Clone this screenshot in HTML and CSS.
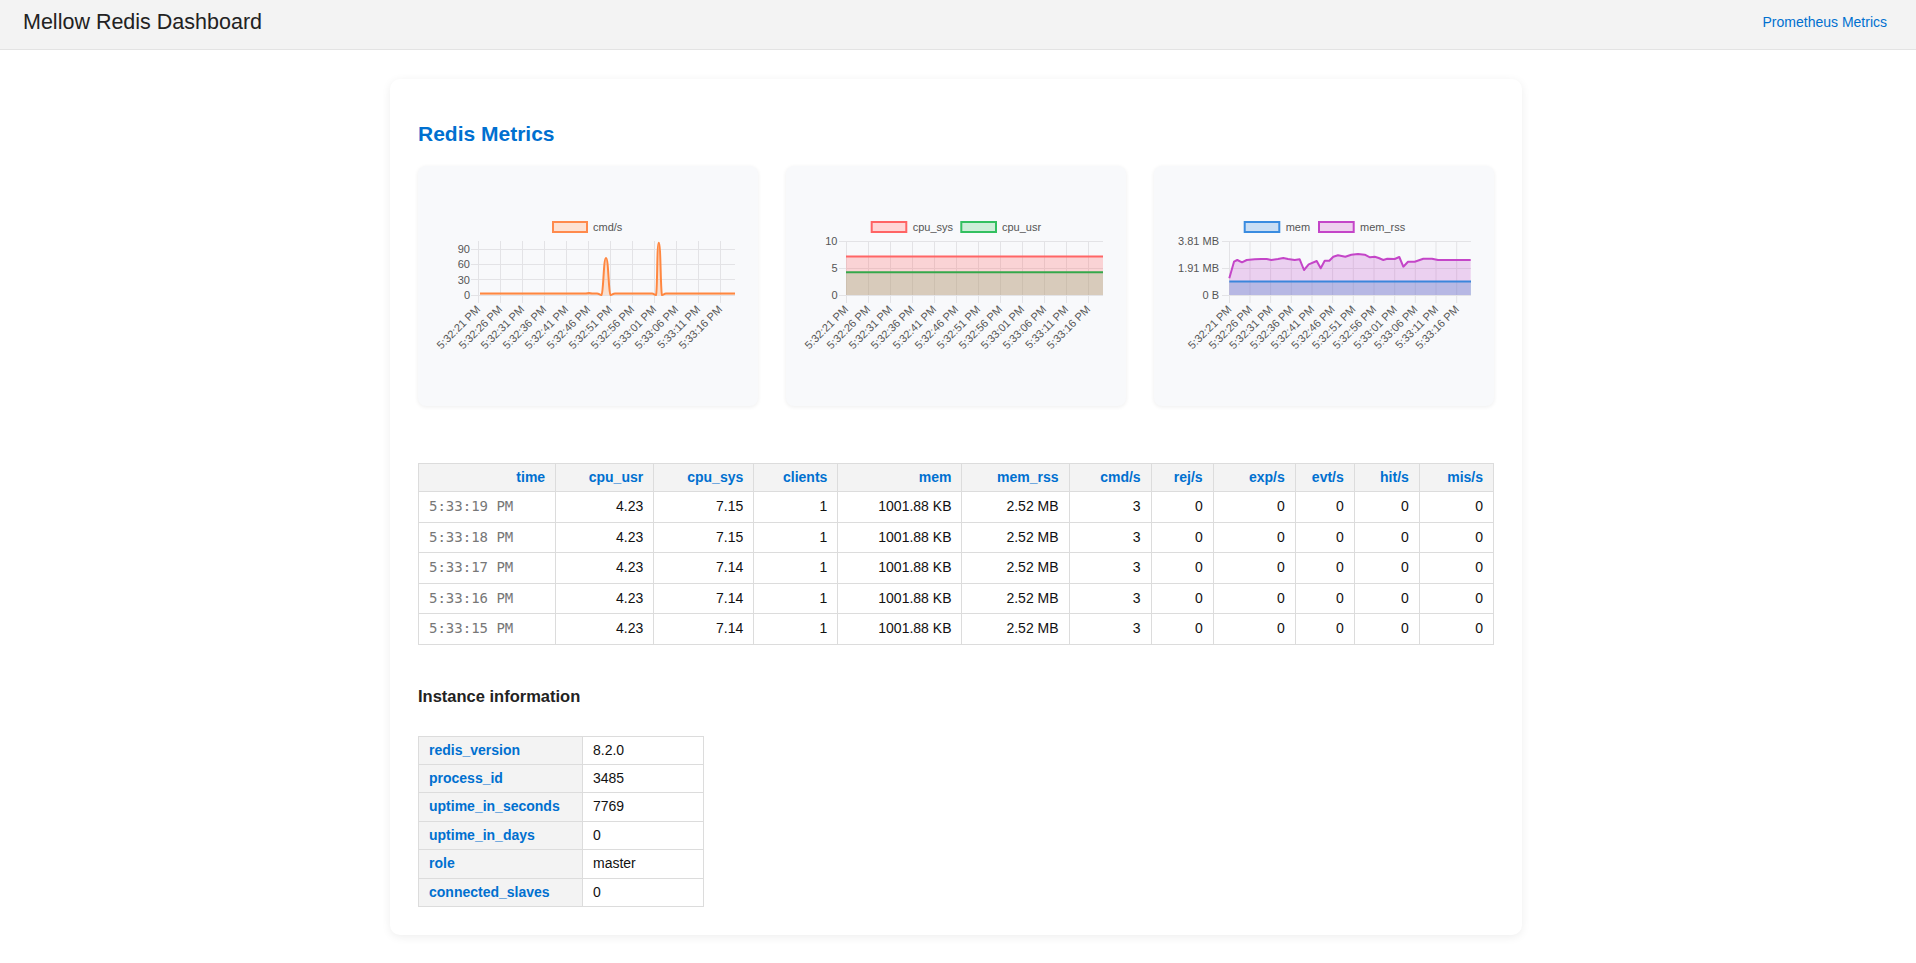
FILE: index.html
```html
<!DOCTYPE html>
<html lang="en">
<head>
<meta charset="utf-8">
<title>Mellow Redis Dashboard</title>
<link rel="stylesheet" href="styles.css">
</head>
<body>
<header class="topbar">
  <div class="brand">Mellow Redis Dashboard</div>
  <a class="nav-link" href="#">Prometheus Metrics</a>
</header>
<main class="page">
  <section class="panel">
    <h2 class="panel-title">Redis Metrics</h2>
    <div class="charts">
      <div class="chart-card">
        <svg class="chart-svg" viewBox="0 0 340 240" width="340" height="240">
          <rect class="lg-orange" x="135" y="56" width="34" height="10"/>
          <text class="lg-text" x="175" y="65">cmd/s</text>
          <path class="grid" d="M53 83.5H317M53 98.5H317M53 113.5H317M53 129.5H317"/>
          <path class="grid" d="M60.5 75V137M82.5 75V137M104.5 75V137M126.5 75V137M148.5 75V137M170.5 75V137M192.5 75V137M214.5 75V137M236.5 75V137M258.5 75V137M280.5 75V137M302.5 75V137"/>
          <text class="ytick" x="52" y="87">90</text>
          <text class="ytick" x="52" y="102">60</text>
          <text class="ytick" x="52" y="117.5">30</text>
          <text class="ytick" x="52" y="133">0</text>
          <path class="fill-orange" d="M62,127.5 L168,127.5 C170,127 172,127 174,127.5 L179,127.5 C181,127.5 182.5,129.5 183.5,129 C185.5,127 185.5,92 188,92 C190.5,92 190.5,127 192.5,129 C193.5,129.5 195,127.5 197,127.5 L234,127.5 C236,127.5 237,129.5 238,129 C239.5,126 238.8,76.7 240.8,76.7 C242.8,76.7 242.5,126 244,129 C245,129.5 246,127.5 248,127.5 L317,127.5 L317,129 L62,129 Z"/>
          <path class="line-orange" d="M62,127.5 L168,127.5 C170,127 172,127 174,127.5 L179,127.5 C181,127.5 182.5,129.5 183.5,129 C185.5,127 185.5,92 188,92 C190.5,92 190.5,127 192.5,129 C193.5,129.5 195,127.5 197,127.5 L234,127.5 C236,127.5 237,129.5 238,129 C239.5,126 238.8,76.7 240.8,76.7 C242.8,76.7 242.5,126 244,129 C245,129.5 246,127.5 248,127.5 L317,127.5"/>
          <g class="xticks">
            <text transform="translate(63,144) rotate(-45)">5:32:21 PM</text>
            <text transform="translate(85,144) rotate(-45)">5:32:26 PM</text>
            <text transform="translate(107,144) rotate(-45)">5:32:31 PM</text>
            <text transform="translate(129,144) rotate(-45)">5:32:36 PM</text>
            <text transform="translate(151,144) rotate(-45)">5:32:41 PM</text>
            <text transform="translate(173,144) rotate(-45)">5:32:46 PM</text>
            <text transform="translate(195,144) rotate(-45)">5:32:51 PM</text>
            <text transform="translate(217,144) rotate(-45)">5:32:56 PM</text>
            <text transform="translate(239,144) rotate(-45)">5:33:01 PM</text>
            <text transform="translate(261,144) rotate(-45)">5:33:06 PM</text>
            <text transform="translate(283,144) rotate(-45)">5:33:11 PM</text>
            <text transform="translate(305,144) rotate(-45)">5:33:16 PM</text>
          </g>
        </svg>
      </div>
      <div class="chart-card">
        <svg class="chart-svg" viewBox="0 0 340 240" width="340" height="240">
          <rect class="lg-red" x="85.7" y="56" width="34.6" height="10"/>
          <text class="lg-text" x="126.7" y="65">cpu_sys</text>
          <rect class="lg-green" x="175.3" y="56" width="34.7" height="10"/>
          <text class="lg-text" x="216" y="65">cpu_usr</text>
          <path class="grid" d="M53 75.5H317M53 102.5H317M53 129.5H317"/>
          <path class="grid" d="M60.5 75V137M82.5 75V137M104.5 75V137M126.5 75V137M148.5 75V137M170.5 75V137M192.5 75V137M214.5 75V137M236.5 75V137M258.5 75V137M280.5 75V137M302.5 75V137"/>
          <text class="ytick" x="51.5" y="79">10</text>
          <text class="ytick" x="51.5" y="106">5</text>
          <text class="ytick" x="51.5" y="133">0</text>
          <rect class="fill-red" x="60" y="90.4" width="257" height="38.6"/>
          <rect class="fill-green" x="60" y="106.2" width="257" height="22.8"/>
          <path class="line-red" d="M60,90.4 H317"/>
          <path class="line-green" d="M60,106.2 H317"/>
          <g class="xticks">
            <text transform="translate(63,144) rotate(-45)">5:32:21 PM</text>
            <text transform="translate(85,144) rotate(-45)">5:32:26 PM</text>
            <text transform="translate(107,144) rotate(-45)">5:32:31 PM</text>
            <text transform="translate(129,144) rotate(-45)">5:32:36 PM</text>
            <text transform="translate(151,144) rotate(-45)">5:32:41 PM</text>
            <text transform="translate(173,144) rotate(-45)">5:32:46 PM</text>
            <text transform="translate(195,144) rotate(-45)">5:32:51 PM</text>
            <text transform="translate(217,144) rotate(-45)">5:32:56 PM</text>
            <text transform="translate(239,144) rotate(-45)">5:33:01 PM</text>
            <text transform="translate(261,144) rotate(-45)">5:33:06 PM</text>
            <text transform="translate(283,144) rotate(-45)">5:33:11 PM</text>
            <text transform="translate(305,144) rotate(-45)">5:33:16 PM</text>
          </g>
        </svg>
      </div>
      <div class="chart-card">
        <svg class="chart-svg" viewBox="0 0 340 240" width="340" height="240">
          <rect class="lg-blue" x="90.7" y="56" width="34.6" height="10"/>
          <text class="lg-text" x="131.7" y="65">mem</text>
          <rect class="lg-purple" x="165" y="56" width="34.7" height="10"/>
          <text class="lg-text" x="206" y="65">mem_rss</text>
          <path class="grid" d="M68 75.5H317M68 102.5H317M68 129.5H317"/>
          <path class="grid" d="M75.5 75V137M96 75V137M116.6 75V137M137.3 75V137M158 75V137M178.6 75V137M199.3 75V137M220 75V137M240.7 75V137M261.3 75V137M282 75V137M302.7 75V137"/>
          <text class="ytick" x="65" y="79">3.81 MB</text>
          <text class="ytick" x="65" y="106">1.91 MB</text>
          <text class="ytick" x="65" y="133">0 B</text>
          <polygon class="fill-purple" points="75.3,112.3 80,95.7 83.3,94 88,96.3 92.7,94 100.7,93.3 107.3,93 112.7,93 117.3,94 124,93 129.3,92 134,93 140.7,94 145.7,93.3 150,104 154.7,98.3 162.7,95 166.7,102.3 170.7,94.7 175.3,94.7 179.3,90.7 184,89.3 191.3,90.7 197.3,88.7 204,88 210.7,88.7 216,91.3 220.7,90.7 224.7,92 229.3,94 233.3,92.7 240.7,93 245.3,91 249.3,100.7 254,95.7 260.7,95.7 269.3,92.7 278,92.7 284,94 316.7,94 316.7,129 75.3,129"/>
          <rect class="fill-blue" x="75.3" y="115.5" width="241.7" height="13.5"/>
          <polyline class="line-purple" points="75.3,112.3 80,95.7 83.3,94 88,96.3 92.7,94 100.7,93.3 107.3,93 112.7,93 117.3,94 124,93 129.3,92 134,93 140.7,94 145.7,93.3 150,104 154.7,98.3 162.7,95 166.7,102.3 170.7,94.7 175.3,94.7 179.3,90.7 184,89.3 191.3,90.7 197.3,88.7 204,88 210.7,88.7 216,91.3 220.7,90.7 224.7,92 229.3,94 233.3,92.7 240.7,93 245.3,91 249.3,100.7 254,95.7 260.7,95.7 269.3,92.7 278,92.7 284,94 316.7,94"/>
          <path class="line-blue" d="M75.3,115.5 H317"/>
          <g class="xticks">
            <text transform="translate(78.3,144) rotate(-45)">5:32:21 PM</text>
            <text transform="translate(99,144) rotate(-45)">5:32:26 PM</text>
            <text transform="translate(119.6,144) rotate(-45)">5:32:31 PM</text>
            <text transform="translate(140.3,144) rotate(-45)">5:32:36 PM</text>
            <text transform="translate(161,144) rotate(-45)">5:32:41 PM</text>
            <text transform="translate(181.6,144) rotate(-45)">5:32:46 PM</text>
            <text transform="translate(202.3,144) rotate(-45)">5:32:51 PM</text>
            <text transform="translate(223,144) rotate(-45)">5:32:56 PM</text>
            <text transform="translate(243.7,144) rotate(-45)">5:33:01 PM</text>
            <text transform="translate(264.3,144) rotate(-45)">5:33:06 PM</text>
            <text transform="translate(285,144) rotate(-45)">5:33:11 PM</text>
            <text transform="translate(305.7,144) rotate(-45)">5:33:16 PM</text>
          </g>
        </svg>
      </div>
    </div>

    <table class="metrics">
      <colgroup>
        <col class="w-time"><col class="w-cpuusr"><col class="w-cpusys"><col class="w-clients"><col class="w-mem"><col class="w-memrss"><col class="w-cmd"><col class="w-rej"><col class="w-exp"><col class="w-evt"><col class="w-hit"><col class="w-mis">
      </colgroup>
      <thead>
        <tr><th>time</th><th>cpu_usr</th><th>cpu_sys</th><th>clients</th><th>mem</th><th>mem_rss</th><th>cmd/s</th><th>rej/s</th><th>exp/s</th><th>evt/s</th><th>hit/s</th><th>mis/s</th></tr>
      </thead>
      <tbody>
        <tr><td class="time">5:33:19 PM</td><td>4.23</td><td>7.15</td><td>1</td><td>1001.88 KB</td><td>2.52 MB</td><td>3</td><td>0</td><td>0</td><td>0</td><td>0</td><td>0</td></tr>
        <tr><td class="time">5:33:18 PM</td><td>4.23</td><td>7.15</td><td>1</td><td>1001.88 KB</td><td>2.52 MB</td><td>3</td><td>0</td><td>0</td><td>0</td><td>0</td><td>0</td></tr>
        <tr><td class="time">5:33:17 PM</td><td>4.23</td><td>7.14</td><td>1</td><td>1001.88 KB</td><td>2.52 MB</td><td>3</td><td>0</td><td>0</td><td>0</td><td>0</td><td>0</td></tr>
        <tr><td class="time">5:33:16 PM</td><td>4.23</td><td>7.14</td><td>1</td><td>1001.88 KB</td><td>2.52 MB</td><td>3</td><td>0</td><td>0</td><td>0</td><td>0</td><td>0</td></tr>
        <tr><td class="time">5:33:15 PM</td><td>4.23</td><td>7.14</td><td>1</td><td>1001.88 KB</td><td>2.52 MB</td><td>3</td><td>0</td><td>0</td><td>0</td><td>0</td><td>0</td></tr>
      </tbody>
    </table>

    <h3 class="section-title">Instance information</h3>
    <table class="info">
      <colgroup><col class="w-key"><col class="w-val"></colgroup>
      <tbody>
        <tr><th>redis_version</th><td>8.2.0</td></tr>
        <tr><th>process_id</th><td>3485</td></tr>
        <tr><th>uptime_in_seconds</th><td>7769</td></tr>
        <tr><th>uptime_in_days</th><td>0</td></tr>
        <tr><th>role</th><td>master</td></tr>
        <tr><th>connected_slaves</th><td>0</td></tr>
      </tbody>
    </table>
  </section>
</main>
</body>
</html>
```
FILE: styles.css
```css
* { box-sizing: border-box; }

html, body {
  margin: 0;
  padding: 0;
  background: #ffffff;
  font-family: "Liberation Sans", Arial, Helvetica, sans-serif;
  color: #222;
}

.topbar {
  height: 50px;
  background: #f3f3f3;
  border-bottom: 1px solid #e3e3e3;
  display: flex;
  align-items: center;
  justify-content: space-between;
  padding: 0 29px 5px 23px;
}

.brand {
  font-size: 21.5px;
  color: #222;
}

.nav-link {
  font-size: 14px;
  color: #0070d0;
  text-decoration: none;
}

.page {
  padding: 29px 4px 20px 0;
}

.panel {
  width: 1132px;
  margin: 0 auto;
  padding: 28px;
  background: #fff;
  border-radius: 10px;
  box-shadow: 0 2px 10px rgba(0, 0, 0, 0.07);
}

.panel-title {
  margin: 15px 0 20px;
  font-size: 21px;
  line-height: 24px;
  font-weight: bold;
  color: #0070d0;
}

.charts {
  display: grid;
  grid-template-columns: repeat(3, 1fr);
  gap: 28px;
  margin-bottom: 57px;
}

.chart-card {
  height: 240px;
  background: #f8f9fb;
  border-radius: 8px;
  box-shadow: 0 1px 4px rgba(0, 0, 0, 0.07);
  overflow: hidden;
}

.chart-svg {
  display: block;
  font-family: "Liberation Sans", Arial, sans-serif;
}

.grid { stroke: #e3e3e6; stroke-width: 1; fill: none; }
.ytick { font-size: 11px; fill: #555; text-anchor: end; }
.xticks text { font-size: 11px; fill: #555; text-anchor: end; }
.lg-text { font-size: 11px; fill: #555; }

.lg-orange { fill: #fde2d3; stroke: #ff8a4c; stroke-width: 2; }
.lg-red { fill: #ffd6d6; stroke: #ff6464; stroke-width: 2; }
.lg-green { fill: #cdeed8; stroke: #33c060; stroke-width: 2; }
.lg-blue { fill: #c9def4; stroke: #3a8ce0; stroke-width: 2; }
.lg-purple { fill: #eed0ee; stroke: #c445c8; stroke-width: 2; }

.fill-orange { fill: rgba(255, 140, 66, 0.22); }
.line-orange { fill: none; stroke: #ff8740; stroke-width: 2; stroke-linejoin: round; }

.fill-red { fill: rgba(255, 100, 100, 0.25); }
.fill-green { fill: rgba(140, 185, 130, 0.3); }
.line-red { fill: none; stroke: #ff6666; stroke-width: 2; }
.line-green { fill: none; stroke: #34a84a; stroke-width: 2; }

.fill-purple { fill: rgba(192, 64, 200, 0.22); }
.fill-blue { fill: rgba(87, 139, 205, 0.35); }
.line-purple { fill: none; stroke: #c445c8; stroke-width: 2; stroke-linejoin: round; }
.line-blue { fill: none; stroke: #3a86dc; stroke-width: 2; }

.metrics {
  width: 100%;
  border-collapse: collapse;
  table-layout: fixed;
  font-size: 14px;
}

.w-time { width: 137px; }
.w-cpuusr { width: 98px; }
.w-cpusys { width: 100px; }
.w-clients { width: 84px; }
.w-mem { width: 124px; }
.w-memrss { width: 107px; }
.w-cmd { width: 82px; }
.w-rej { width: 62px; }
.w-exp { width: 82px; }
.w-evt { width: 59px; }
.w-hit { width: 65px; }
.w-mis { width: 74px; }

.metrics th {
  background: #f3f3f3;
  color: #0070d0;
  font-weight: bold;
  text-align: right;
  padding: 5px 10px;
  line-height: 17px;
  border: 1px solid #dcdcdc;
}

.metrics td {
  text-align: right;
  padding: 6px 10px;
  line-height: 17.5px;
  border: 1px solid #dcdcdc;
  color: #111;
  white-space: nowrap;
}

.metrics td.time {
  text-align: left;
  font-family: "DejaVu Sans Mono", "Liberation Mono", monospace;
  font-size: 14px;
  color: #777;
}

.section-title {
  margin: 42px 0 30px;
  font-size: 16.5px;
  line-height: 19px;
  font-weight: bold;
  color: #222;
}

.info {
  width: 285px;
  border-collapse: collapse;
  table-layout: fixed;
  font-size: 14px;
}

.w-key { width: 164px; }
.w-val { width: 121px; }

.info th {
  background: #f3f3f3;
  color: #0070d0;
  font-weight: bold;
  text-align: left;
  padding: 6px 10px;
  line-height: 15.4px;
  border: 1px solid #dcdcdc;
}

.info td {
  padding: 6px 10px;
  line-height: 15.4px;
  border: 1px solid #dcdcdc;
  color: #111;
}
```
